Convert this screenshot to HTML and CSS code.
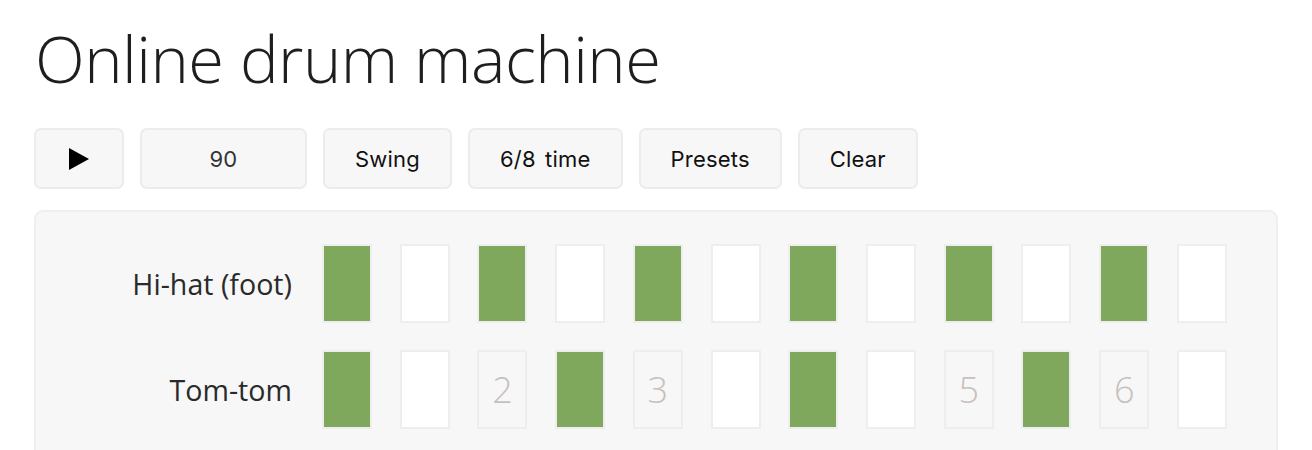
FILE: index.html
```html
<!DOCTYPE html>
<html>
<head>
<meta charset="utf-8">
<link rel="stylesheet" href="styles.css">
</head>
<body>
<main class="page">
  <h1 class="title">Online drum machine</h1>
  <div class="toolbar">
    <button class="btn btn-play" aria-label="Play">
      <svg width="22" height="24" viewBox="0 0 22 24"><path d="M1 1 L21 12 L1 23 Z" fill="#000"/></svg>
    </button>
    <div class="btn btn-tempo">90</div>
    <button class="btn">Swing</button>
    <button class="btn">6/8 time</button>
    <button class="btn">Presets</button>
    <button class="btn">Clear</button>
  </div>
  <section class="panel">
    <div class="row">
      <div class="label">Hi-hat (foot)</div>
      <div class="cells">
        <div class="cell on"></div><div class="cell"></div>
        <div class="cell on"></div><div class="cell"></div>
        <div class="cell on"></div><div class="cell"></div>
        <div class="cell on"></div><div class="cell"></div>
        <div class="cell on"></div><div class="cell"></div>
        <div class="cell on"></div><div class="cell"></div>
      </div>
    </div>
    <div class="row">
      <div class="label">Tom-tom</div>
      <div class="cells">
        <div class="cell on"></div><div class="cell"></div>
        <div class="cell num">2</div><div class="cell on"></div>
        <div class="cell num">3</div><div class="cell"></div>
        <div class="cell on"></div><div class="cell"></div>
        <div class="cell num">5</div><div class="cell on"></div>
        <div class="cell num">6</div><div class="cell"></div>
      </div>
    </div>
  </section>
</main>
</body>
</html>
```
FILE: styles.css
```css
html, body {
  margin: 0;
  padding: 0;
  background: #fff;
}
.page {
  padding: 0 34px;
  font-family: "Open Sans", "Noto Sans", sans-serif;
  color: #222;
}
.title {
  font-family: "Open Sans", sans-serif;
  font-weight: 300;
  font-size: 65px;
  line-height: 1;
  margin: 0;
  padding: 26px 0 0 1px;
  color: #1e1e1e;
  letter-spacing: -0.5px;
}
.toolbar {
  display: flex;
  gap: 16px;
  margin-top: 37px;
}
.btn {
  box-sizing: border-box;
  height: 61px;
  padding: 0 30px;
  background: #f7f7f7;
  border: 2px solid #ececec;
  border-radius: 7px;
  font-family: "Inter", "Liberation Sans", sans-serif;
  font-size: 22px;
  letter-spacing: 0.2px;
  word-spacing: 3px;
  color: #111;
  display: flex;
  align-items: center;
  justify-content: center;
}
.btn-play {
  width: 90px;
  padding: 0;
}
.btn-tempo {
  width: 167px;
  padding: 0;
  color: #333;
}
.panel {
  margin-top: 21px;
  background: #f7f7f7;
  border: 2px solid #efefef;
  border-radius: 9px;
  padding: 32px 49px 40px 0;
  display: flex;
  flex-direction: column;
  gap: 27px;
}
.row {
  display: flex;
  align-items: center;
  gap: 30px;
}
.label {
  width: 256px;
  text-align: right;
  font-size: 28.6px;
  color: #2a2a2a;
}
.cells {
  flex: 1;
  display: flex;
  justify-content: space-between;
}
.cell {
  box-sizing: border-box;
  width: 50px;
  height: 79px;
  border: 2px solid #eeeeee;
  background: #fff;
}
.cell.on {
  background: #7fa85c;
}
.cell.num {
  background: #f7f7f7;
  color: #c8c0bb;
  font-size: 36px;
  font-weight: 300;
  display: flex;
  align-items: center;
  justify-content: center;
}
```
